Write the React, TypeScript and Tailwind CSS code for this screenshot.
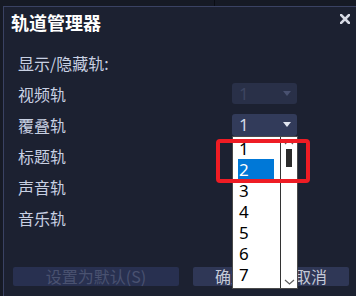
import React from 'react';

const tracks = [
  { label: '视频轨', state: 'disabled' },
  { label: '覆叠轨', state: 'open' },
  { label: '标题轨', state: 'none' },
  { label: '声音轨', state: 'none' },
  { label: '音乐轨', state: 'none' },
];

const Arrow = ({ color }: { color: string }) => (
  <svg width="8" height="5" viewBox="0 0 8 5">
    <path d="M0 0 H8 L4 5 Z" fill={color} />
  </svg>
);

const Select = ({ disabled }: { disabled?: boolean }) => (
  <div
    className={
      disabled
        ? 'w-[65px] h-[21px] rounded-[3px] bg-[#293048] flex items-center justify-between pl-[7px] pr-[6px]'
        : 'w-[65px] h-[22px] rounded-[3px] bg-[#323b5a] flex items-center justify-between pl-[7px] pr-[6px]'
    }
  >
    <span
      className={
        disabled
          ? "font-['Noto_Sans',sans-serif] text-[17px] leading-[21px] text-[#3d4560]"
          : "font-['Noto_Sans',sans-serif] text-[17px] leading-[21px] text-[#d4d9e6]"
      }
    >
      1
    </span>
    <Arrow color={disabled ? '#495170' : '#e2e6f0'} />
  </div>
);

export default function App() {
  const items = ['1', '2', '3', '4', '5', '6', '7'];

  return (
    <div className="relative w-[356px] h-[296px] overflow-hidden bg-[#161a25] font-['Noto_Sans_CJK_SC','Noto_Sans',sans-serif]">
      {/* window edge behind the dialog */}
      <div className="h-[6px] flex">
        <div className="ml-[214px] w-[1px] h-full bg-[#0b0e15]" />
      </div>

      <div className="ml-[3px] h-[290px] border-l border-t border-[#3a4263] bg-[#1c2131] flex flex-col">
        {/* title bar */}
        <div className="h-[40px] flex items-start justify-between pl-[7px] pr-[6px]">
          <span className="mt-[3px] text-[18px] leading-[24px] font-bold text-white">轨道管理器</span>
          <svg className="mt-[7px]" width="10" height="10" viewBox="0 0 10 10">
            <path d="M1 1 L9 9 M9 1 L1 9" stroke="#d6dae4" strokeWidth="2.6" strokeLinecap="square" />
          </svg>
        </div>

        {/* rows */}
        <div className="flex flex-col">
          <div className="h-[31px] flex items-center pl-[14px]">
            <span className="text-[16px] leading-[20px] text-[#c8d0e2]">显示/隐藏轨:</span>
          </div>
          {tracks.map((t) => (
            <div key={t.label} className="h-[31px] flex items-center pl-[14px]">
              <span className="w-[214px] text-[16px] leading-[20px] text-[#c8d0e2]">{t.label}</span>
              {t.state === 'disabled' && <Select disabled />}
              {t.state === 'open' && <Select />}
            </div>
          ))}
        </div>

        {/* buttons */}
        <div className="mt-auto pb-[10px] pl-[9px] flex">
          <div className="w-[166px] h-[19px] rounded-[2px] bg-[#283050] flex items-center justify-center text-[16px] leading-[19px] text-[#4a5270]">
            设置为默认(S)
          </div>
          <div className="ml-[14px] w-[76px] h-[19px] rounded-[2px] bg-[#2f3756] flex items-center justify-center text-[16px] leading-[19px] text-[#c4cad8]">
            确定
          </div>
          <div className="ml-[4px] w-[76px] h-[19px] rounded-[2px] bg-[#2f3756] flex items-center justify-center text-[16px] leading-[19px] text-[#c4cad8]">
            取消
          </div>
        </div>
      </div>

      {/* open dropdown list */}
      <div className="absolute left-[232px] top-[136px] w-[66px] h-[153px] bg-white border border-[#4a4a4a] flex">
        <div className="w-[48px] border-r border-[#333333] pt-[1px] flex flex-col">
          {items.map((n) => (
            <div
              key={n}
              className={
                n === '2'
                  ? "ml-[5px] w-[36px] h-[21px] pl-[1px] bg-[#0078d7] text-white font-['Noto_Sans',sans-serif] text-[17px] leading-[21px]"
                  : "ml-[5px] w-[36px] h-[21px] pl-[1px] text-black font-['Noto_Sans',sans-serif] text-[17px] leading-[21px]"
              }
            >
              {n}
            </div>
          ))}
        </div>
        <div className="flex-1 flex flex-col items-center pt-[2px] pb-[3px]">
          <svg width="10" height="6" viewBox="0 0 10 6">
            <path d="M1 5 L5 1 L9 5" fill="none" stroke="#606060" strokeWidth="1.2" />
          </svg>
          <div className="mt-[4px] w-[6px] h-[18px] bg-[#2b2b2b]" />
          <svg className="mt-auto" width="11" height="6" viewBox="0 0 11 6">
            <path d="M1 1 L5.5 5 L10 1" fill="none" stroke="#606060" strokeWidth="1.2" />
          </svg>
        </div>
      </div>

      {/* red annotation */}
      <div className="absolute left-[216px] top-[139px] w-[94px] h-[44px] border-[4px] border-[#ee1c24] rounded-[4px]" />
    </div>
  );
}
